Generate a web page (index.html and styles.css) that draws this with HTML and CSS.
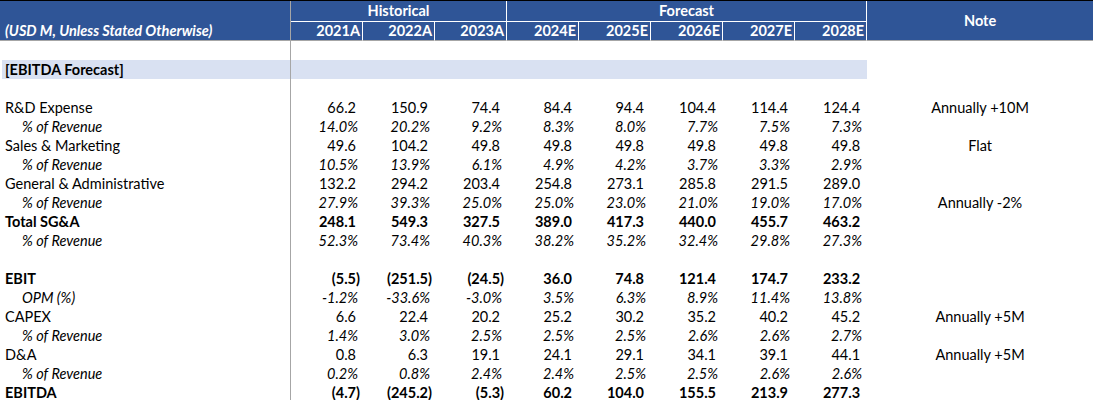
FILE: index.html
```html
<!DOCTYPE html>
<html>
<head>
<meta charset="utf-8">
<link rel="stylesheet" href="styles.css">
</head>
<body>
<table class="sheet">
  <colgroup>
    <col class="c-label"><col class="c-yr"><col class="c-yr"><col class="c-yr"><col class="c-yr"><col class="c-yr"><col class="c-yr"><col class="c-yr"><col class="c-yr"><col class="c-note">
  </colgroup>
  <thead>
    <tr class="h1">
      <th class="hl"></th>
      <th class="grp" colspan="3">Historical</th>
      <th class="grp" colspan="5">Forecast</th>
      <th class="note-h" rowspan="2">Note</th>
    </tr>
    <tr class="h2">
      <th class="hl unit">(USD M, Unless Stated Otherwise)</th>
      <th class="yr">2021A</th><th class="yr">2022A</th><th class="yr">2023A</th><th class="yr">2024E</th><th class="yr">2025E</th><th class="yr">2026E</th><th class="yr">2027E</th><th class="yr last">2028E</th>
    </tr>
  </thead>
  <tbody>
    <tr><td class="lab"></td><td colspan="8"></td><td></td></tr>
    <tr class="band"><td class="lab sec">[EBITDA Forecast]</td><td class="bandfill" colspan="8"></td><td></td></tr>
    <tr><td class="lab"></td><td colspan="8"></td><td></td></tr>
    <tr><td class="lab">R&amp;D Expense</td><td class="num">66.2</td><td class="num">150.9</td><td class="num">74.4</td><td class="num">84.4</td><td class="num">94.4</td><td class="num">104.4</td><td class="num">114.4</td><td class="num">124.4</td><td class="note">Annually +10M</td></tr>
    <tr class="it"><td class="lab sub">% of Revenue</td><td class="pct">14.0%</td><td class="pct">20.2%</td><td class="pct">9.2%</td><td class="pct">8.3%</td><td class="pct">8.0%</td><td class="pct">7.7%</td><td class="pct">7.5%</td><td class="pct">7.3%</td><td class="note"></td></tr>
    <tr><td class="lab">Sales &amp; Marketing</td><td class="num">49.6</td><td class="num">104.2</td><td class="num">49.8</td><td class="num">49.8</td><td class="num">49.8</td><td class="num">49.8</td><td class="num">49.8</td><td class="num">49.8</td><td class="note">Flat</td></tr>
    <tr class="it"><td class="lab sub">% of Revenue</td><td class="pct">10.5%</td><td class="pct">13.9%</td><td class="pct">6.1%</td><td class="pct">4.9%</td><td class="pct">4.2%</td><td class="pct">3.7%</td><td class="pct">3.3%</td><td class="pct">2.9%</td><td class="note"></td></tr>
    <tr><td class="lab">General &amp; Administrative</td><td class="num">132.2</td><td class="num">294.2</td><td class="num">203.4</td><td class="num">254.8</td><td class="num">273.1</td><td class="num">285.8</td><td class="num">291.5</td><td class="num">289.0</td><td class="note"></td></tr>
    <tr class="it"><td class="lab sub">% of Revenue</td><td class="pct">27.9%</td><td class="pct">39.3%</td><td class="pct">25.0%</td><td class="pct">25.0%</td><td class="pct">23.0%</td><td class="pct">21.0%</td><td class="pct">19.0%</td><td class="pct">17.0%</td><td class="note up">Annually -2%</td></tr>
    <tr class="bold"><td class="lab">Total SG&amp;A</td><td class="num">248.1</td><td class="num">549.3</td><td class="num">327.5</td><td class="num">389.0</td><td class="num">417.3</td><td class="num">440.0</td><td class="num">455.7</td><td class="num">463.2</td><td class="note"></td></tr>
    <tr class="it"><td class="lab sub">% of Revenue</td><td class="pct">52.3%</td><td class="pct">73.4%</td><td class="pct">40.3%</td><td class="pct">38.2%</td><td class="pct">35.2%</td><td class="pct">32.4%</td><td class="pct">29.8%</td><td class="pct">27.3%</td><td class="note"></td></tr>
    <tr><td class="lab"></td><td colspan="8"></td><td></td></tr>
    <tr class="bold"><td class="lab">EBIT</td><td class="neg">(5.5)</td><td class="neg">(251.5)</td><td class="neg">(24.5)</td><td class="num">36.0</td><td class="num">74.8</td><td class="num">121.4</td><td class="num">174.7</td><td class="num">233.2</td><td class="note"></td></tr>
    <tr class="it"><td class="lab sub">OPM (%)</td><td class="pct">-1.2%</td><td class="pct">-33.6%</td><td class="pct">-3.0%</td><td class="pct">3.5%</td><td class="pct">6.3%</td><td class="pct">8.9%</td><td class="pct">11.4%</td><td class="pct">13.8%</td><td class="note"></td></tr>
    <tr><td class="lab">CAPEX</td><td class="num">6.6</td><td class="num">22.4</td><td class="num">20.2</td><td class="num">25.2</td><td class="num">30.2</td><td class="num">35.2</td><td class="num">40.2</td><td class="num">45.2</td><td class="note">Annually +5M</td></tr>
    <tr class="it"><td class="lab sub">% of Revenue</td><td class="pct">1.4%</td><td class="pct">3.0%</td><td class="pct">2.5%</td><td class="pct">2.5%</td><td class="pct">2.5%</td><td class="pct">2.6%</td><td class="pct">2.6%</td><td class="pct">2.7%</td><td class="note"></td></tr>
    <tr><td class="lab">D&amp;A</td><td class="num">0.8</td><td class="num">6.3</td><td class="num">19.1</td><td class="num">24.1</td><td class="num">29.1</td><td class="num">34.1</td><td class="num">39.1</td><td class="num">44.1</td><td class="note">Annually +5M</td></tr>
    <tr class="it"><td class="lab sub">% of Revenue</td><td class="pct">0.2%</td><td class="pct">0.8%</td><td class="pct">2.4%</td><td class="pct">2.4%</td><td class="pct">2.5%</td><td class="pct">2.5%</td><td class="pct">2.6%</td><td class="pct">2.6%</td><td class="note"></td></tr>
    <tr class="bold"><td class="lab">EBITDA</td><td class="neg">(4.7)</td><td class="neg">(245.2)</td><td class="neg">(5.3)</td><td class="num">60.2</td><td class="num">104.0</td><td class="num">155.5</td><td class="num">213.9</td><td class="num">277.3</td><td class="note"></td></tr>
  </tbody>
</table>
</body>
</html>
```
FILE: styles.css
```css
html, body {
  margin: 0;
  padding: 0;
  background: #ffffff;
}
body {
  font-family: Lato, "Open Sans", "Liberation Sans", sans-serif;
  font-size: 14.5px;
  color: #000;
  overflow: hidden;
}
.sheet {
  table-layout: fixed;
  border-collapse: separate;
  border-spacing: 0;
  width: 1093px;
  border-top: 1px solid #000;
}
.c-label { width: 291px; }
.c-yr { width: 72px; }
.c-note { width: 226px; }

.sheet th, .sheet td {
  padding: 0;
  height: 19px;
  line-height: 19px;
  white-space: nowrap;
  overflow: visible;
  box-sizing: border-box;
}
thead th {
  background: #2F5597;
  color: #fff;
  font-weight: bold;
}
.h1 th { height: 20px; line-height: 20px; }
.h2 th { height: 19px; border-bottom: 1px solid #a6a6a6; line-height: 18px; }
th.hl {
  text-align: left;
  border-right: 1px solid #a6a6a6;
}
th.unit {
  font-style: italic;
  padding-left: 5px;
}
th.grp {
  text-align: center;
  border-bottom: 1px solid #fff;
  border-right: 1px solid #fff;
}
th.yr {
  text-align: right;
  padding-right: 2px;
  border-right: 1px solid #fff;
}
th.note-h {
  text-align: center;
  vertical-align: middle;
  border-bottom: 1px solid #a6a6a6;
}
.h1 th.note-h { line-height: 19px; }

td.lab {
  border-right: 1px solid #a6a6a6;
  padding-left: 5px;
}
td.sub {
  padding-left: 22px;
  font-style: italic;
}
td.sec {
  font-weight: bold;
  background: #D9E1F2;
  border-left: 2px solid #fff;
  padding-left: 3px;
}
td.bandfill { background: #D9E1F2; }
td.num { text-align: right; padding-right: 7px; }
td.pct { text-align: right; padding-right: 5px; font-style: italic; }
td.neg { text-align: right; padding-right: 3px; }
td.note { text-align: center; }
tr.bold td { font-weight: bold; }
```
